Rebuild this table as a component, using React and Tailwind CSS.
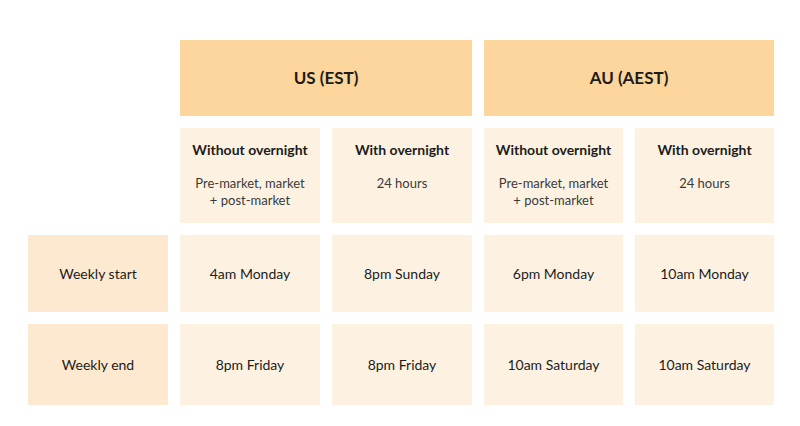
import React from "react";

const rows = [
  { label: "Weekly start", values: ["4am Monday", "8pm Sunday", "6pm Monday", "10am Monday"] },
  { label: "Weekly end", values: ["8pm Friday", "8pm Friday", "10am Saturday", "10am Saturday"] },
];

const subHeads = [
  { title: "Without overnight", lines: ["Pre-market, market", "+ post-market"] },
  { title: "With overnight", lines: ["24 hours"] },
  { title: "Without overnight", lines: ["Pre-market, market", "+ post-market"] },
  { title: "With overnight", lines: ["24 hours"] },
];

const App = () => {
  return (
    <div className="h-[426px] w-[800px] bg-white pl-[28px] pt-[40px] font-['Lato','Liberation_Sans',sans-serif] text-[#1c1c1c]">
      <div className="grid grid-cols-[140px_140px_140px_139px_139px] grid-rows-[76px_95px_77px_81px] gap-[12px]">
        <div />
        <div className="col-span-2 flex items-center justify-center bg-[#fdd69e] text-[17px] font-bold">
          US (EST)
        </div>
        <div className="col-span-2 flex items-center justify-center bg-[#fdd69e] text-[17px] font-bold">
          AU (AEST)
        </div>

        <div />
        {subHeads.map((s, i) => (
          <div key={i} className="flex flex-col items-center bg-[#fdf2e2] pt-[13px] text-center">
            <h4 className="text-[14px] font-bold leading-[18px]">{s.title}</h4>
            <div className="mt-[16px] text-[13px] leading-[17px] text-[#3a3a3a]">
              {s.lines.map((l) => (
                <p key={l}>{l}</p>
              ))}
            </div>
          </div>
        ))}

        {rows.map((r) => (
          <React.Fragment key={r.label}>
            <div className="flex items-center justify-center bg-[#fde9d0] text-[14px]">
              {r.label}
            </div>
            {r.values.map((v, i) => (
              <div key={i} className="flex items-center justify-center bg-[#fdf2e2] text-[14px]">
                {v}
              </div>
            ))}
          </React.Fragment>
        ))}
      </div>
    </div>
  );
};

export default App;
